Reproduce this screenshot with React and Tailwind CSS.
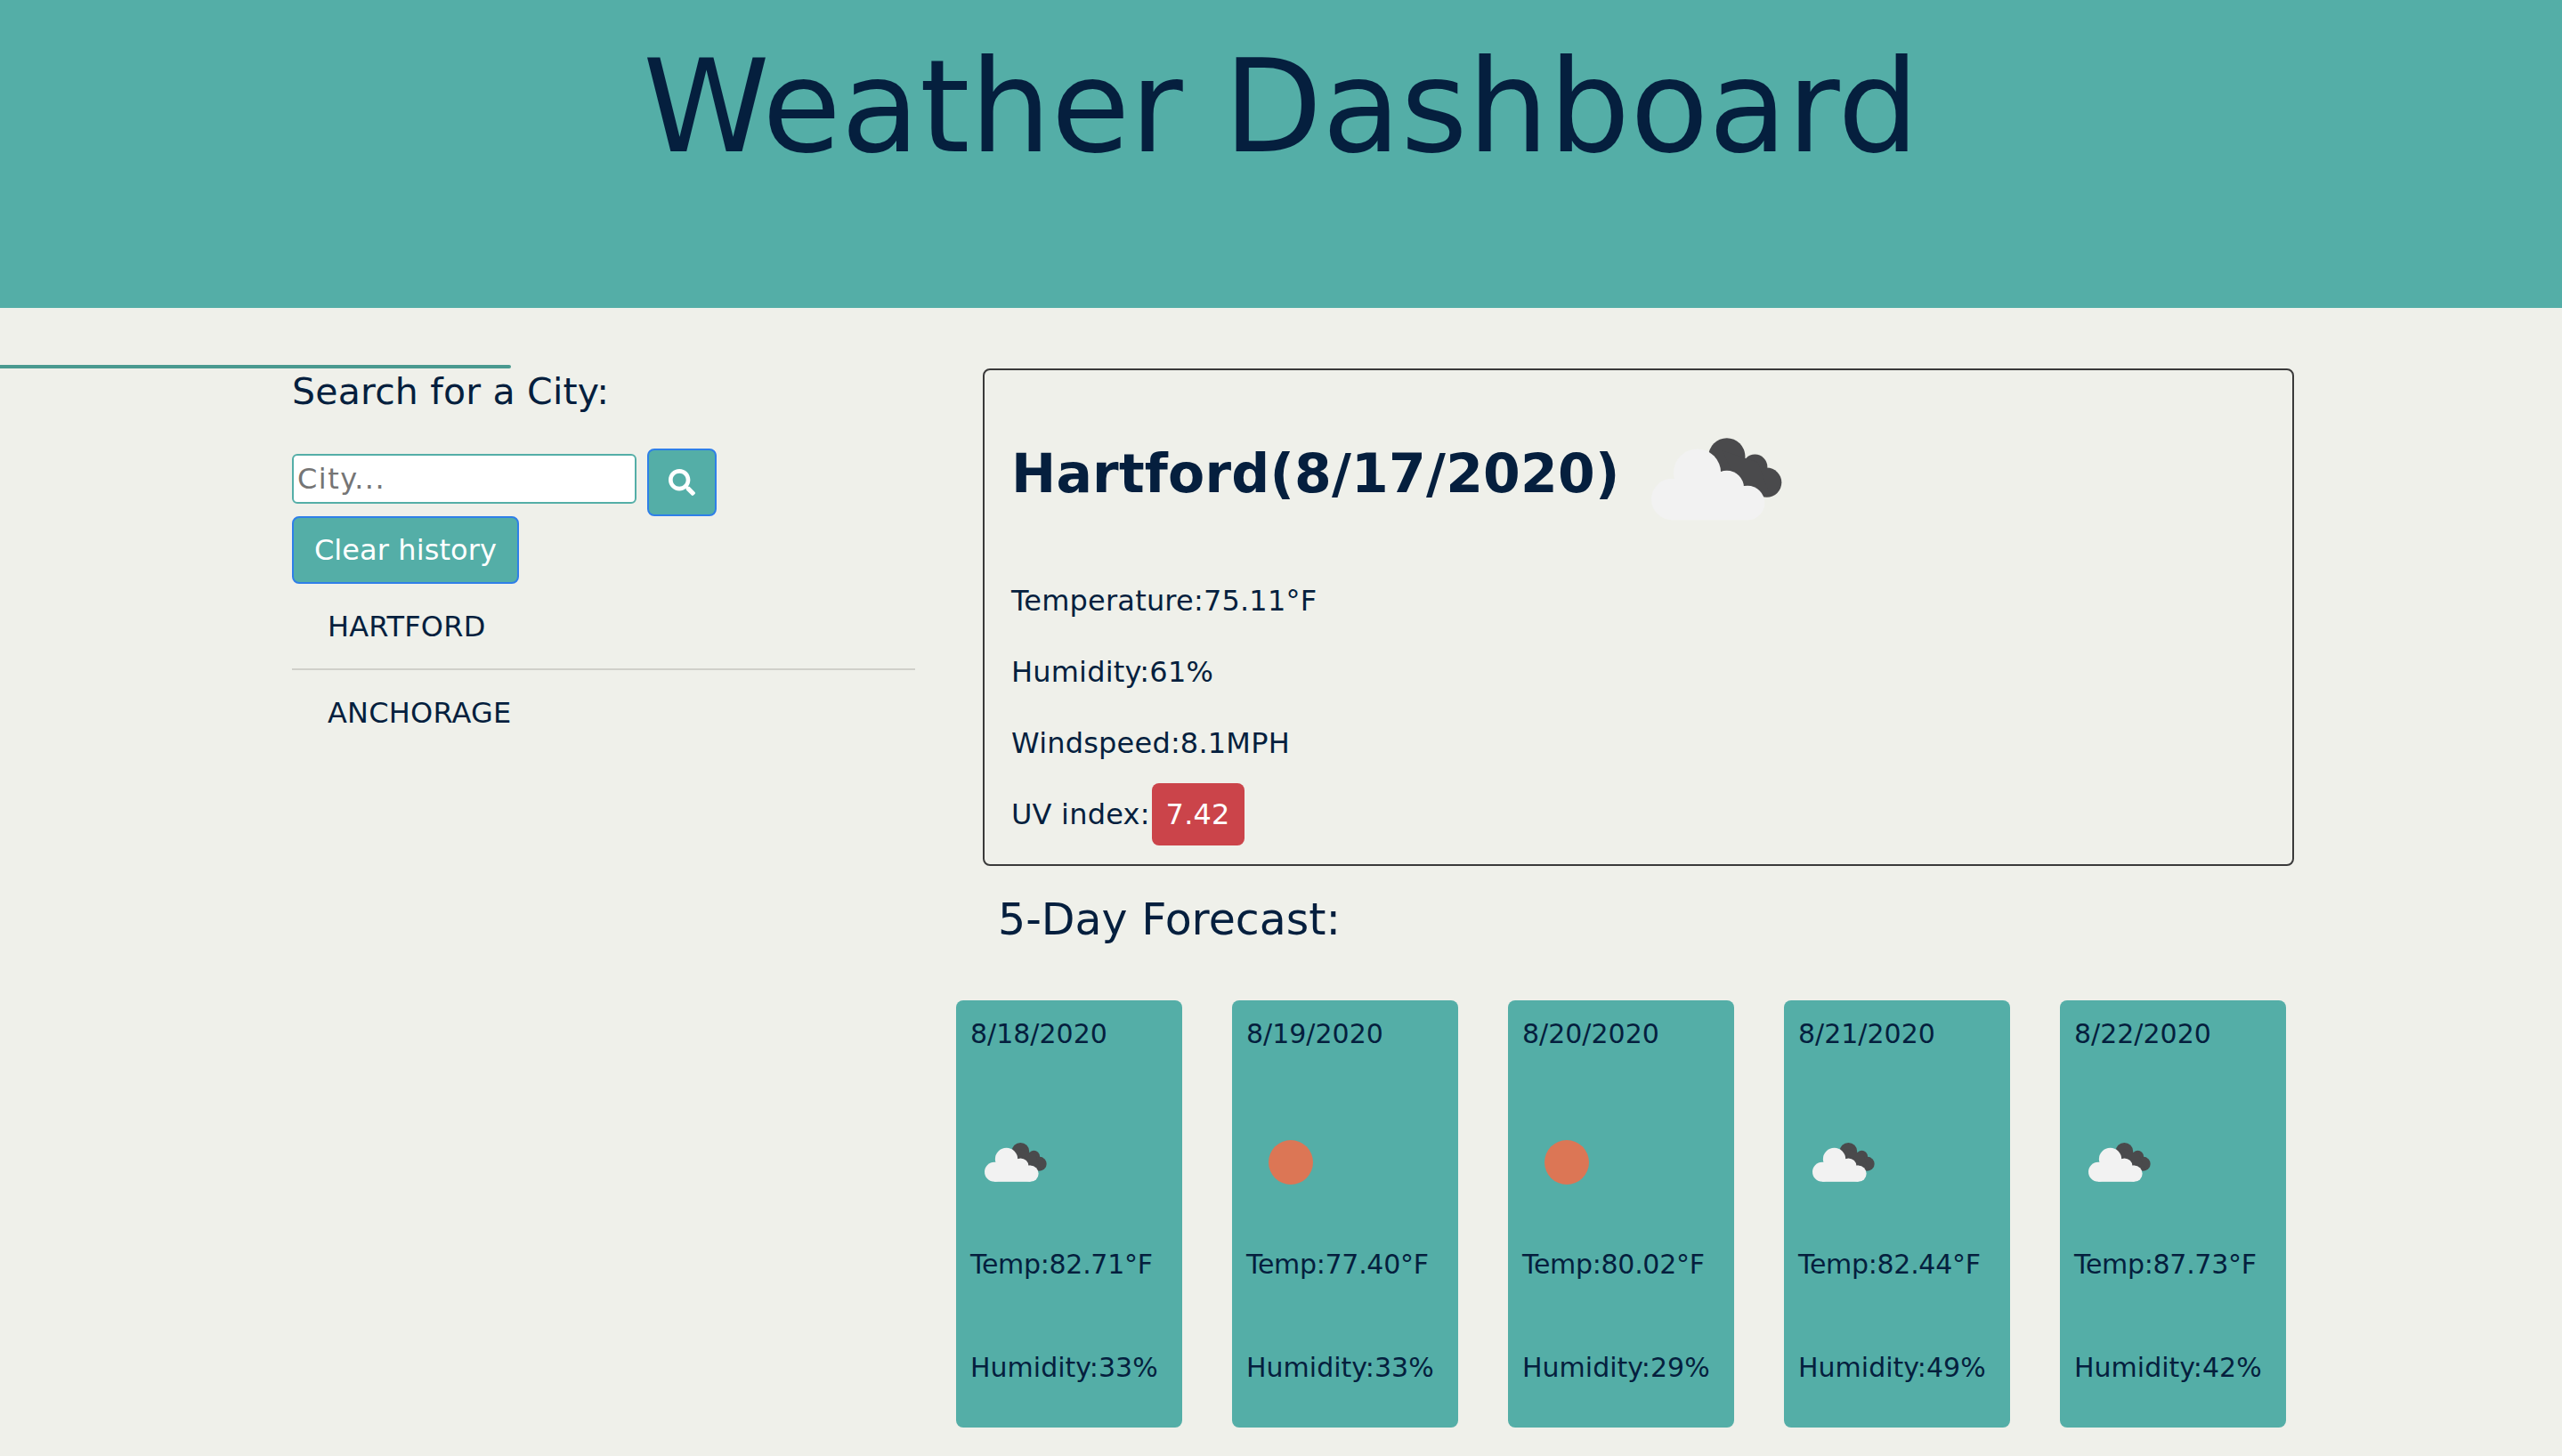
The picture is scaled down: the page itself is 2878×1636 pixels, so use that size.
import React from 'react';
import { FaSearch } from 'react-icons/fa';

const Cloud = ({ className }) => (
  <svg className={className} viewBox="100 68 442 278">
    <g fill="#4a4a4c">
      <circle cx="355" cy="130" r="62" />
      <circle cx="450" cy="165" r="42" />
      <circle cx="490" cy="218" r="50" />
      <path d="M340 110 L460 150 L500 260 L420 280 Z" />
    </g>
    <g fill="#f2f2f2">
      <circle cx="170" cy="275" r="70" />
      <circle cx="255" cy="185" r="80" />
      <circle cx="355" cy="236" r="58" />
      <circle cx="425" cy="287" r="58" />
      <rect x="170" y="230" width="255" height="115" />
    </g>
  </svg>
);

const forecast = [
  { date: '8/18/2020', temp: '82.71', humidity: '33', icon: 'cloud' },
  { date: '8/19/2020', temp: '77.40', humidity: '33', icon: 'sun' },
  { date: '8/20/2020', temp: '80.02', humidity: '29', icon: 'sun' },
  { date: '8/21/2020', temp: '82.44', humidity: '49', icon: 'cloud' },
  { date: '8/22/2020', temp: '87.73', humidity: '42', icon: 'cloud' },
];

const ForecastCard = ({ date, temp, humidity, icon }) => (
  <div className="w-[254px] h-[480px] bg-[#54aea7] rounded-lg pl-4 text-[30px] leading-[44px] flex flex-col">
    <p className="mt-4">{date}</p>
    <div className="h-[100px] mt-[72px] flex items-center">
      {icon === 'cloud' ? (
        <Cloud className="w-[70px] h-[44px] ml-4" />
      ) : (
        <div className="w-[50px] h-[50px] ml-[25px] rounded-full bg-[#dc7655]" />
      )}
    </div>
    <p className="mt-[43px] tracking-[-0.3px]">Temp:{temp}°F</p>
    <p className="mt-[72px]">Humidity:{humidity}%</p>
  </div>
);

export default function App() {
  return (
    <div className="h-[1636px] overflow-hidden bg-[#eff0ea] text-[#051f3e] font-['DejaVu_Sans',sans-serif]">
      <header className="h-[346px] bg-[#54aea7] text-center">
        <h1 className="pt-[34px] text-[144px] leading-[173px]">Weather Dashboard</h1>
      </header>

      <hr className="w-[574px] h-1 mt-16 border-0 bg-[#4a9a90] rounded-r-sm" />

      <main className="flex pl-[328px]">
        <section className="w-[700px] shrink-0">
          <h3 className="text-[41px] leading-[52px] tracking-[0.2px]">Search for a City:</h3>
          <div className="flex items-center gap-3 mt-[38px] h-[76px]">
            <input
              placeholder="City..."
              className="w-[387px] h-[56px] px-1 -mt-[9px] bg-white border-2 border-[#54aea7] rounded-md text-[32px] tracking-[1.5px] placeholder:text-[#757575] outline-none"
            />
            <button className="w-[78px] h-[76px] bg-[#54aea7] border-2 border-[#2f7fe8] rounded-lg flex items-center justify-center text-white">
              <FaSearch className="w-[30px] h-[30px]" />
            </button>
          </div>
          <button className="w-[255px] h-[76px] bg-[#54aea7] border-2 border-[#2f7fe8] rounded-lg text-white text-[32px] tracking-[0.1px]">
            Clear history
          </button>
          <ul className="text-[32px] leading-[48px] tracking-[0.2px]">
            <li className="pl-10 pt-6 pb-[23px] border-b-2 border-[#d0d0ca]">HARTFORD</li>
            <li className="pl-10 pt-6 pb-6">ANCHORAGE</li>
          </ul>
        </section>

        <section className="ml-[46px] w-[1503px]">
          <div className="ml-[30px] w-[1473px] h-[559px] border-2 border-[#3a3a3a] rounded-lg pl-[30px] text-[32px] leading-[48px] tracking-[0.2px]">
            <div className="h-[235px] pt-14 flex items-start">
              <h2 className="text-[60px] leading-[120px] font-bold tracking-[0.2px]">Hartford(8/17/2020)</h2>
              <Cloud className="w-[147px] h-[93px] ml-[35px] mt-5" />
            </div>
            <p>Temperature:75.11°F</p>
            <p className="mt-8">Humidity:61%</p>
            <p className="mt-8">Windspeed:8.1MPH</p>
            <p className="mt-8 flex items-center">
              UV index:
              <span className="w-[104px] h-[70px] ml-0.5 -my-[11px] bg-[#cb444a] rounded-lg text-white flex items-center justify-center">7.42</span>
            </p>
          </div>
          <h3 className="pl-[47px] mt-8 text-[49px] leading-[58px]">5-Day Forecast:</h3>
          <div className="flex gap-14 mt-[61px]">
            {forecast.map(day => (
              <ForecastCard key={day.date} {...day} />
            ))}
          </div>
        </section>
      </main>
    </div>
  );
}
